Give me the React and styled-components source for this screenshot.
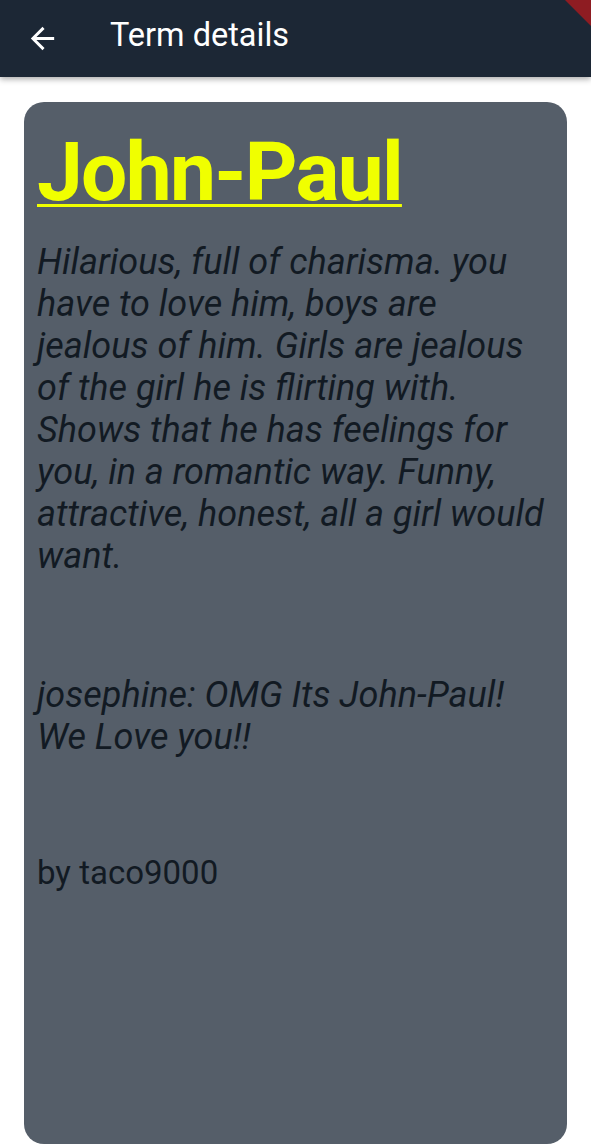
import React from "react";
import styled, { createGlobalStyle } from "styled-components";

const Global = createGlobalStyle`
  html, body { margin: 0; padding: 0; background: #ffffff; }
  body { font-family: Roboto, "Noto Sans", sans-serif; }
  * { box-sizing: border-box; }
`;

const Screen = styled.div`
  position: relative;
  height: 100vh;
  display: flex;
  flex-direction: column;
  overflow: hidden;
  background: #ffffff;
`;

const AppBar = styled.header`
  position: relative;
  z-index: 2;
  flex: 0 0 77px;
  display: flex;
  align-items: center;
  padding: 0 0 6px 24px;
  background: #1c2735;
  box-shadow: 0 2px 6px rgba(0, 0, 0, 0.35);
`;

const BackButton = styled.button`
  display: flex;
  align-items: center;
  justify-content: center;
  width: 36px;
  height: 36px;
  margin-top: 6px;
  padding: 0;
  border: 0;
  background: transparent;
  color: #ffffff;
  cursor: pointer;
`;

const Title = styled.h1`
  margin: 0 0 0 50px;
  font-family: Roboto, sans-serif;
  font-size: 32.5px;
  font-weight: 400;
  color: #ffffff;
  line-height: 1.172;
`;

const DebugCorner = styled.div`
  position: absolute;
  top: 0;
  right: 0;
  width: 26px;
  height: 26px;
  background: #8e1c22;
  clip-path: polygon(0 0, 100% 0, 100% 100%);
  z-index: 3;
`;

const Body = styled.main`
  flex: 1;
  display: flex;
  padding: 25px 24px 1px 24px;
`;

const Card = styled.article`
  flex: 1;
  background: #555e69;
  border-radius: 20px;
  padding: 22px 13px;
  display: flex;
  flex-direction: column;
`;

const Word = styled.h2`
  margin: 0 0 21px 0;
  font-family: Roboto, sans-serif;
  font-size: 82px;
  font-weight: 700;
  letter-spacing: -1.7px;
  line-height: 1.172;
  color: #f0ff00;
  text-decoration: underline;
  text-decoration-thickness: 3px;
  text-underline-offset: 4px;
`;

const Text = styled.p`
  margin: 0 0 ${(p) => p.$gap}px 0;
  font-family: Roboto, sans-serif;
  font-size: ${(p) => p.$size}px;
  font-style: ${(p) => (p.$italic ? "italic" : "normal")};
  font-weight: 400;
  line-height: ${(p) => p.$lh};
  color: #121a23;
`;

function ArrowBack() {
  return (
    <svg width="35" height="35" viewBox="0 0 24 24" fill="currentColor">
      <path d="M20 11H7.83l5.59-5.59L12 4l-8 8 8 8 1.41-1.41L7.83 13H20v-2z" />
    </svg>
  );
}

export default function App() {
  return (
    <>
      <Global />
      <Screen>
        <AppBar>
          <BackButton aria-label="Back">
            <ArrowBack />
          </BackButton>
          <Title>Term details</Title>
        </AppBar>
        <DebugCorner />
        <Body>
          <Card>
            <Word>John-Paul</Word>
            <Text $italic $size={36} $lh="42px" $gap={97}>
              Hilarious, full of charisma. you have to love him, boys are
              jealous of him. Girls are jealous of the girl he is flirting
              with. Shows that he has feelings for you, in a romantic way.
              Funny, attractive, honest, all a girl would want.
            </Text>
            <Text $italic $size={36} $lh="42px" $gap={96}>
              josephine: OMG Its John-Paul! We Love you!!
            </Text>
            <Text $size={33} $lh={1.172} $gap={0}>
              by taco9000
            </Text>
          </Card>
        </Body>
      </Screen>
    </>
  );
}
